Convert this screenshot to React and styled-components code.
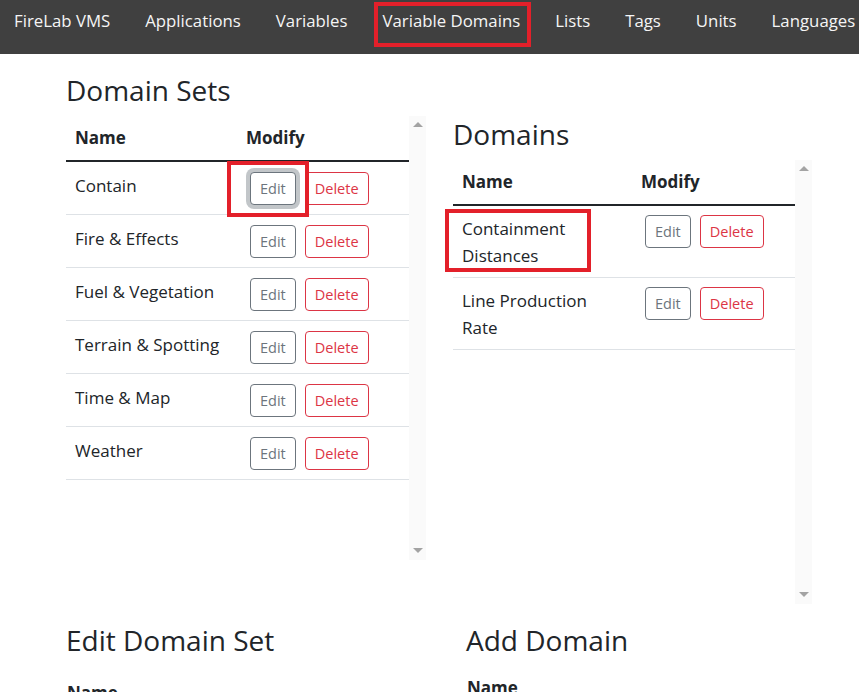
import React from "react";
import styled, { createGlobalStyle, css } from "styled-components";

const Global = createGlobalStyle`
  html, body { margin: 0; padding: 0; overflow: hidden; background: #fff; }
  body { font-family: "Open Sans", "Noto Sans", sans-serif; color: #212529; }
  * { box-sizing: border-box; }
`;

const RED = "#e3202a";

const NavBar = styled.nav`
  display: flex;
  align-items: flex-start;
  gap: 35px;
  height: 54px;
  padding: 8px 0 0 14px;
  background: #404040;
  white-space: nowrap;
  overflow: hidden;
`;

const NavItem = styled.a`
  position: relative;
  color: #f5f5f5;
  font-size: 16.8px;
  line-height: 26px;
  text-decoration: none;
  ${(p) =>
    p.$marked &&
    css`
      &::after {
        content: "";
        position: absolute;
        left: -8px;
        right: -11px;
        top: -6px;
        bottom: -13px;
        border: 4px solid ${RED};
      }
    `}
`;

const Main = styled.main`
  padding: 18px 0 0 66px;
`;

const UpperRow = styled.div`
  display: flex;
  gap: 27px;
  align-items: flex-start;
`;

const Column = styled.section`
  width: ${(p) => p.$width}px;
  padding-top: ${(p) => p.$offset || 0}px;
  flex: none;
`;

const Heading = styled.h3`
  margin: 0 0 7px;
  font-size: 28px;
  line-height: 37px;
  font-weight: 500;
  color: #212529;
`;

const ScrollBox = styled.div`
  display: flex;
  height: 444px;
`;

const TableArea = styled.div`
  flex: 1;
  min-width: 0;
`;

const Scrollbar = styled.div`
  width: 17px;
  flex: none;
  background: #fafafa;
  display: flex;
  flex-direction: column;
  justify-content: space-between;
  align-items: center;
  padding: 6px 0 7px;
`;

const Arrow = styled.span`
  width: 0;
  height: 0;
  border-left: 5px solid transparent;
  border-right: 5px solid transparent;
  ${(p) =>
    p.$down
      ? css`border-top: 5px solid #a3a3a3;`
      : css`border-bottom: 5px solid #a3a3a3;`}
`;

const Table = styled.table`
  width: 100%;
  border-collapse: collapse;
  table-layout: fixed;
  font-size: 17px;
  line-height: 27px;

  th {
    text-align: left;
    font-weight: 700;
    padding: 8px 9px 9px;
    border-bottom: 2px solid #212529;
  }
  td {
    vertical-align: top;
    padding: ${(p) => p.$pad};
    border-bottom: 1px solid #dee2e6;
  }
  th:first-child,
  td:first-child {
    width: ${(p) => p.$nameCol}px;
  }
`;

const Actions = styled.div`
  display: flex;
  gap: 9px;
  padding-left: 4px;
`;

const Button = styled.button`
  font-family: "Open Sans", "Noto Sans", sans-serif;
  font-size: 14.5px;
  line-height: 23px;
  padding: 4px 9px;
  border-radius: 4px;
  background: #fff;
  border: 1px solid ${(p) => (p.$danger ? "#dc3545" : "#6c757d")};
  color: ${(p) => (p.$danger ? "#dc3545" : "#6c757d")};
  cursor: pointer;
  ${(p) => p.$focused && css`box-shadow: 0 0 0 4px #c2c6c9;`}
`;

const Annot = styled.span`
  position: relative;
  display: ${(p) => (p.$block ? "block" : "inline-flex")};
  &::after {
    content: "";
    position: absolute;
    left: ${(p) => p.$l}px;
    right: ${(p) => p.$r}px;
    top: ${(p) => p.$t}px;
    bottom: ${(p) => p.$b}px;
    border: 4px solid ${RED};
    pointer-events: none;
  }
`;

const BottomRow = styled.div`
  display: flex;
  margin-top: 18px;
`;

const Label = styled.div`
  margin-top: ${(p) => p.$top}px;
  padding-left: 1px;
  font-size: 17px;
  line-height: 27px;
  font-weight: 700;
`;

const navItems = ["FireLab VMS", "Applications", "Variables", "Variable Domains", "Lists", "Tags", "Units", "Languages"];
const domainSets = ["Contain", "Fire & Effects", "Fuel & Vegetation", "Terrain & Spotting", "Time & Map", "Weather"];
const domains = ["Containment Distances", "Line Production Rate"];

function ActionButtons({ focusFirst }) {
  return (
    <Actions>
      {focusFirst ? (
        <Annot $l={-23} $r={-13} $t={-11} $b={-12}>
          <Button $focused>Edit</Button>
        </Annot>
      ) : (
        <Button>Edit</Button>
      )}
      <Button $danger>Delete</Button>
    </Actions>
  );
}

function DataTable({ rows, nameCol, pad, markedRow, focusRow }) {
  return (
    <ScrollBox>
      <TableArea>
        <Table $nameCol={nameCol} $pad={pad}>
          <thead>
            <tr>
              <th>Name</th>
              <th>Modify</th>
            </tr>
          </thead>
          <tbody>
            {rows.map((r, i) => (
              <tr key={r}>
                <td>
                  {i === markedRow ? (
                    <Annot $block $l={-17} $r={32} $t={-6} $b={-3}>
                      {r}
                    </Annot>
                  ) : (
                    r
                  )}
                </td>
                <td>
                  <ActionButtons focusFirst={i === focusRow} />
                </td>
              </tr>
            ))}
          </tbody>
        </Table>
      </TableArea>
      <Scrollbar>
        <Arrow />
        <Arrow $down />
      </Scrollbar>
    </ScrollBox>
  );
}

export default function App() {
  return (
    <>
      <Global />
      <NavBar>
        {navItems.map((n) => (
          <NavItem key={n} href="#" $marked={n === "Variable Domains"}>
            {n}
          </NavItem>
        ))}
      </NavBar>
      <Main>
        <UpperRow>
          <Column $width={360}>
            <Heading>Domain Sets</Heading>
            <DataTable rows={domainSets} nameCol={171} pad="10px 9px 9px" focusRow={0} />
          </Column>
          <Column $width={359} $offset={44}>
            <Heading>Domains</Heading>
            <DataTable rows={domains} nameCol={179} pad="9px 9px 8px" markedRow={0} />
          </Column>
        </UpperRow>
        <BottomRow>
          <Column $width={400}>
            <Heading>Edit Domain Set</Heading>
            <Label $top={20}>Name</Label>
          </Column>
          <Column $width={400}>
            <Heading>Add Domain</Heading>
            <Label $top={15}>Name</Label>
          </Column>
        </BottomRow>
      </Main>
    </>
  );
}
